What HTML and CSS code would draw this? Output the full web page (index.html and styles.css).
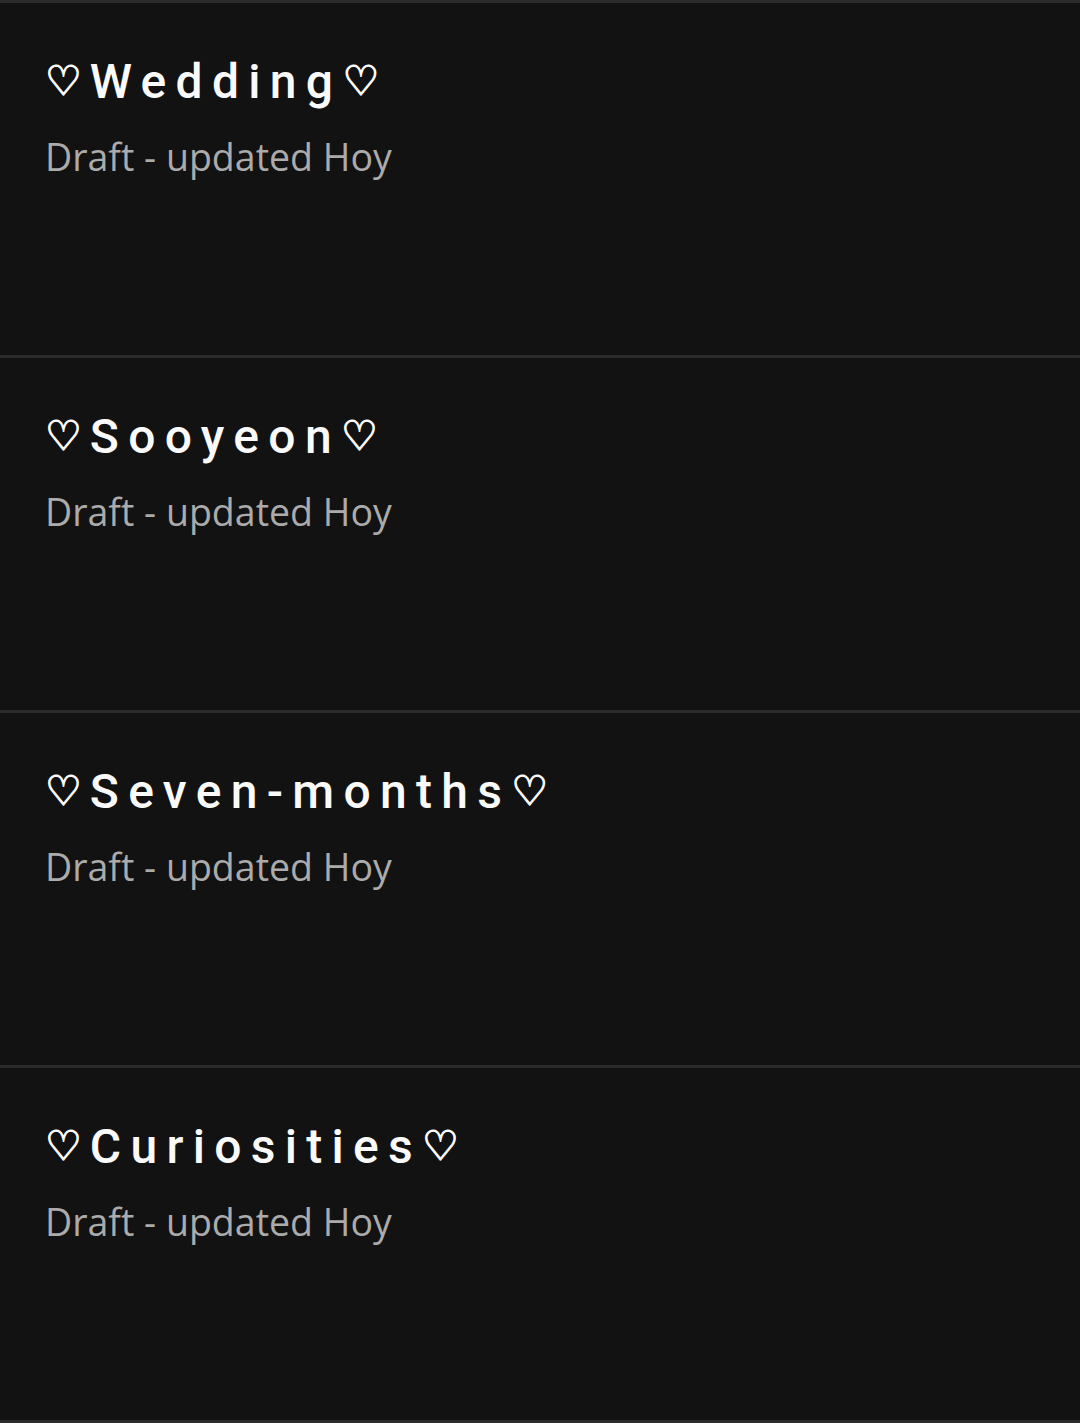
FILE: index.html
```html
<!DOCTYPE html>
<html lang="en">
<head>
    <meta charset="UTF-8">
    <meta name="viewport" content="width=device-width, initial-scale=1.0">
    <title>Drafts</title>
    <link rel="stylesheet" href="styles.css">
</head>
<body>
    <div class="draft-list">
        <div class="draft">
            <div class="draft-title"><span class="heart">♡</span>Wedding<span class="heart">♡</span></div>
            <div class="draft-meta">Draft - updated Hoy</div>
        </div>
        <div class="draft">
            <div class="draft-title"><span class="heart">♡</span>Sooyeon<span class="heart">♡</span></div>
            <div class="draft-meta">Draft - updated Hoy</div>
        </div>
        <div class="draft">
            <div class="draft-title"><span class="heart">♡</span>Seven-months<span class="heart">♡</span></div>
            <div class="draft-meta">Draft - updated Hoy</div>
        </div>
        <div class="draft">
            <div class="draft-title"><span class="heart">♡</span>Curiosities<span class="heart">♡</span></div>
            <div class="draft-meta">Draft - updated Hoy</div>
        </div>
    </div>
</body>
</html>
```

FILE: styles.css
```css
/* Drafts list */
body {
    margin: 0;
    padding: 0;
    background-color: #121212;
    font-family: Roboto, "Noto Sans", sans-serif;
}

.draft-list {
    display: flex;
    flex-direction: column;
    border-bottom: 3px solid #2b2b2b;
}

.draft {
    height: 352px;
    box-sizing: content-box;
    border-top: 3px solid #2b2b2b;
    padding: 0 45px;
}

.draft-title {
    margin-top: 48px;
    font-size: 48px;
    font-weight: 500;
    letter-spacing: 9.3px;
    color: #fafafa;
    line-height: 60px;
}

.heart {
    font-family: "DejaVu Sans", sans-serif;
    font-size: 41px;
    font-weight: 700;
    letter-spacing: 8px;
    vertical-align: 3px;
    -webkit-text-stroke: 1.4px #fafafa;
}

.draft-meta {
    margin-top: 21px;
    font-family: "Open Sans", "Noto Sans", sans-serif;
    font-size: 37.5px;
    color: #ababab;
    line-height: 48px;
}
```
